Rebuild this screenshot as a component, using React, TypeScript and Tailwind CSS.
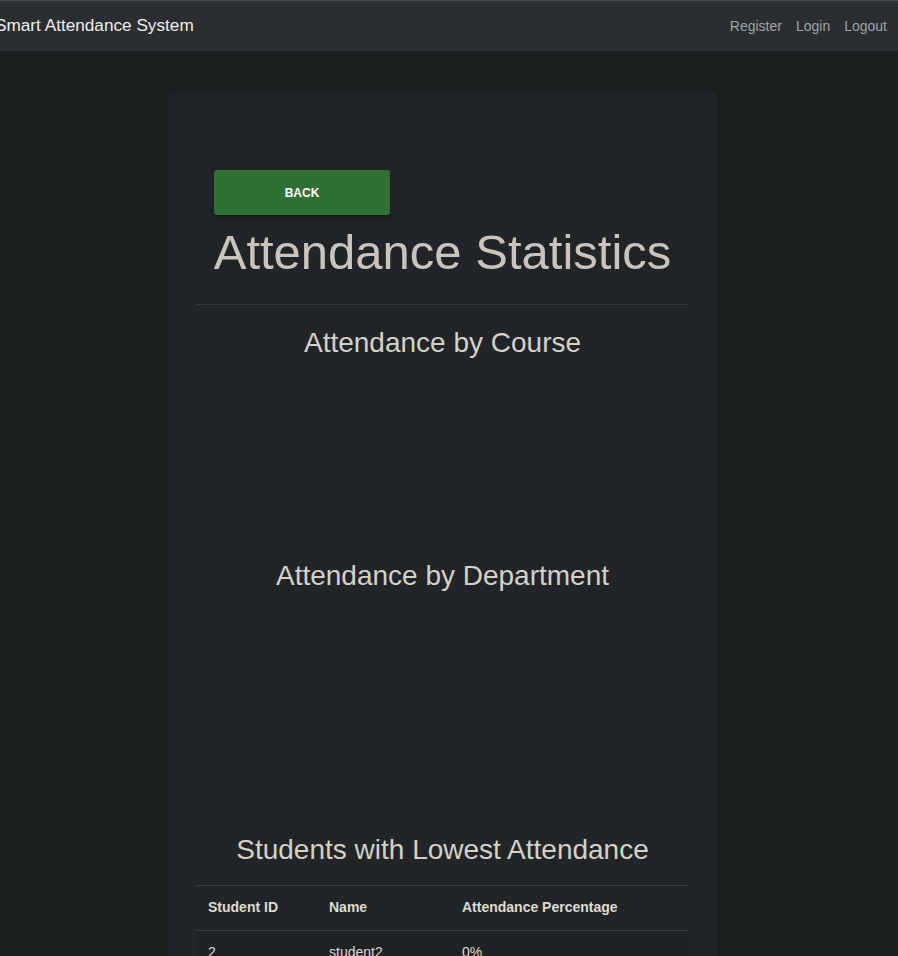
import React from "react";

const font = { fontFamily: '"Liberation Sans", Arial, sans-serif' };

export default function App() {
  return (
    <div className="min-h-screen bg-[#1c1f20] overflow-hidden" style={font}>
      <nav className="h-[51px] border-t border-[#4a4d50] bg-[#2b2e31] flex items-center justify-between">
        <span className="-ml-[5px] text-[17.2px] text-[#eeeeee] whitespace-nowrap">Smart Attendance System</span>
        <div className="flex items-center gap-[14px] pr-[11px] text-[14px] text-[#9ea3a8]">
          <span>Register</span>
          <span>Login</span>
          <span>Logout</span>
        </div>
      </nav>
      <main className="pt-[42px]">
        <div className="ml-[168px] w-[549px] rounded-[5px] bg-[#222527] px-[28px] pt-[77px] pb-[40px]">
          <button className="ml-[18px] h-[45px] w-[176px] rounded-[3px] bg-[#307034] text-[12px] font-bold text-white shadow-[0_2px_4px_rgba(0,0,0,0.35)]">
            BACK
          </button>
          <h1 className="mt-[8px] text-center text-[49px] leading-[1.2] text-[#c9c4bd]">
            Attendance Statistics
          </h1>
          <hr className="mt-[22px] border-0 border-t border-[#35383b]" />
          <h2 className="mt-[21px] text-center text-[28px] leading-[1.2] text-[#d4d0ca]">
            Attendance by Course
          </h2>
          <div className="h-[200px]" />
          <h2 className="text-center text-[28px] leading-[1.2] text-[#d4d0ca]">
            Attendance by Department
          </h2>
          <div className="h-[240px]" />
          <h2 className="text-center text-[28px] leading-[1.2] text-[#d4d0ca]">
            Students with Lowest Attendance
          </h2>
          <table className="mt-[18px] w-full border-collapse text-[14px] text-[#dedad4]">
            <thead>
              <tr className="border-t border-b border-[#3a3d40]">
                <th className="h-[45px] w-[121px] px-[12px] text-left font-bold">Student ID</th>
                <th className="h-[45px] w-[133px] px-[12px] text-left font-bold">Name</th>
                <th className="h-[45px] px-[12px] text-left font-bold">Attendance Percentage</th>
              </tr>
            </thead>
            <tbody>
              <tr className="bg-[#202325] border-b border-[#3a3d40]">
                <td className="h-[45px] px-[12px]">2</td>
                <td className="h-[45px] px-[12px]">student2</td>
                <td className="h-[45px] px-[12px]">0%</td>
              </tr>
              <tr className="border-b border-[#3a3d40]">
                <td className="h-[45px] px-[12px]">3</td>
                <td className="h-[45px] px-[12px]">student3</td>
                <td className="h-[45px] px-[12px]">0%</td>
              </tr>
            </tbody>
          </table>
        </div>
      </main>
    </div>
  );
}
